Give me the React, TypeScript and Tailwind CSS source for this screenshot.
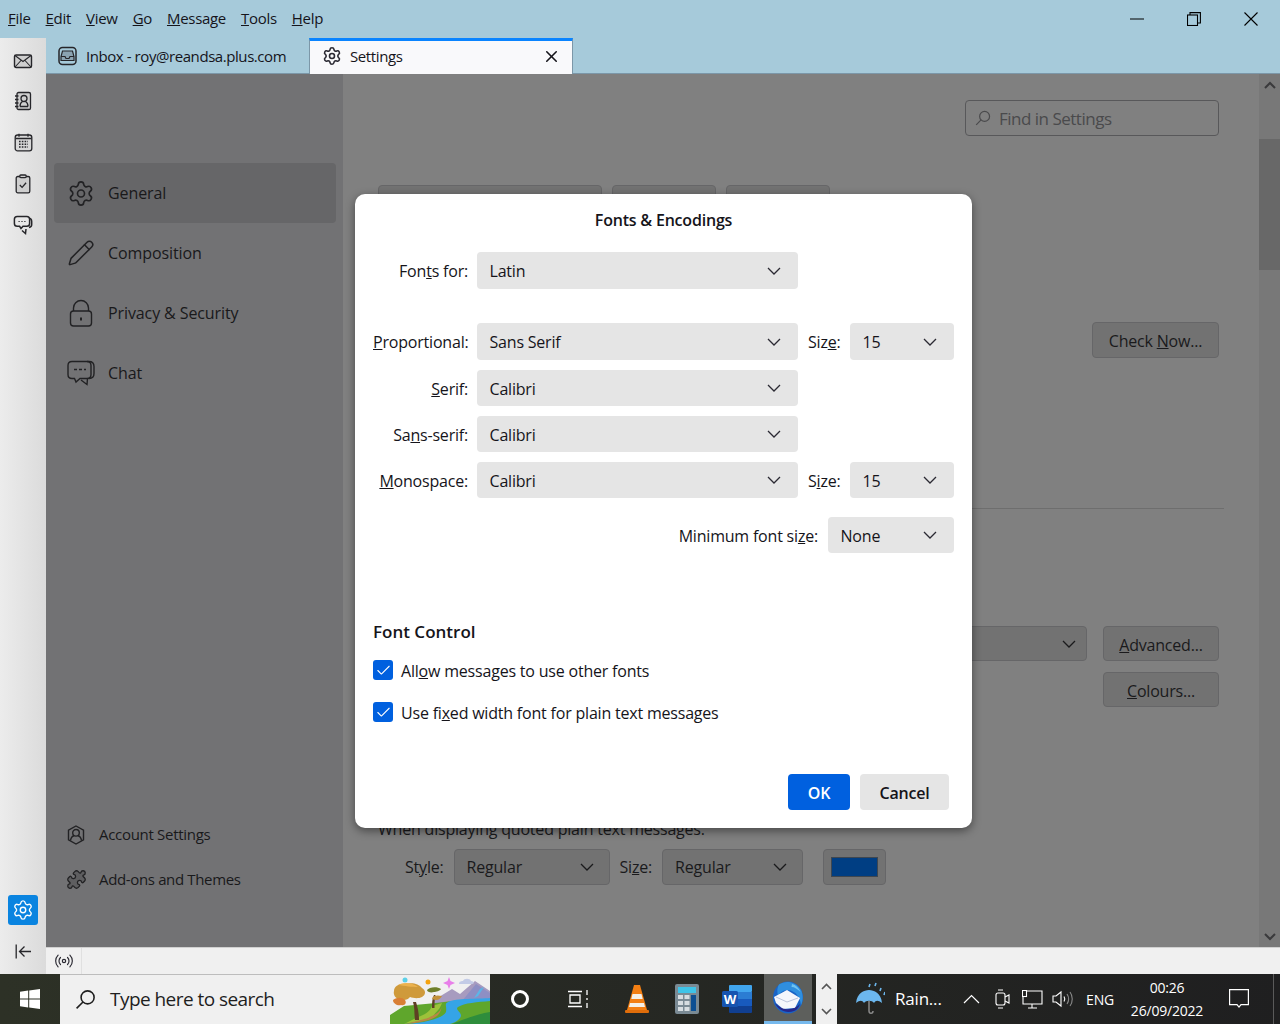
import type { ReactNode } from 'react'
import { Check, Pencil, Puzzle, Radio, Settings, X } from 'lucide-react'

const font = "[font-family:'Open_Sans','Noto_Sans',sans-serif]"

function Chevron({ className = 'text-[#2b2a33]' }: { className?: string }) {
  return (
    <svg width="14" height="8" viewBox="0 0 14 8" fill="none" stroke="currentColor" strokeWidth="1.3" className={className}>
      <path d="M1 1l6 6 6-6" />
    </svg>
  )
}

function Magnifier({ size, className }: { size: number; className?: string }) {
  return (
    <svg width={size} height={size} viewBox="0 0 20 20" fill="none" stroke="currentColor" strokeWidth="1.5" className={className}>
      <circle cx="12" cy="8" r="6.2" />
      <path d="M7.6 12.4L1.5 18.5" />
    </svg>
  )
}

function DialogSelect({ value, width, height = 'h-9', textPad = 'pt-[2px]' }: { value: string; width: string; height?: string; textPad?: string }) {
  return (
    <div className={`${width} ${height} flex items-center justify-between rounded-[4px] bg-[#e5e5e5] pl-[12.5px] pr-[17px] text-[16px] text-[#15141a]`}>
      <span className={textPad}>{value}</span>
      <Chevron />
    </div>
  )
}

function DimSelect({ value, width }: { value: string; width: string }) {
  return (
    <div className={`${width} flex h-9 items-center justify-between rounded-[4px] border border-[#666668] bg-[#727272] pl-3 pr-[15px] text-[16px] text-[#1a1a1c]`}>
      <span>{value}</span>
      <Chevron className="text-[#1a1a1c]" />
    </div>
  )
}

function DimButton({ width, height = 'h-[35px]', children }: { width: string; height?: string; children: ReactNode }) {
  return (
    <div className={`${width} ${height} flex items-center justify-center rounded-[4px] border border-[#666668] bg-[#727272] text-[16px] text-[#1a1a1c]`}>
      {children}
    </div>
  )
}

function FontRow({ label, value, size, tall }: { label: ReactNode; value: string; size?: ReactNode; tall?: boolean }) {
  const textPad = tall ? '' : 'pt-[2px]'
  const height = tall ? 'h-[37px]' : 'h-9'
  return (
    <div className="flex items-center">
      <div className={`w-[95px] text-right text-[16px] text-[#15141a] ${textPad}`}>{label}</div>
      <div className="ml-[9px]">
        <DialogSelect value={value} width="w-[321px]" height={height} textPad={textPad} />
      </div>
      {size && <div className={`ml-[10px] w-[33px] text-[16px] text-[#15141a] ${textPad}`}>{size}</div>}
      {size && (
        <div className="ml-[9px]">
          <DialogSelect value="15" width="w-[104px]" height={height} textPad={textPad} />
        </div>
      )}
    </div>
  )
}

function CheckRow({ children }: { children: ReactNode }) {
  return (
    <div className="flex h-5 items-center">
      <div className="flex size-5 items-center justify-center rounded-[3px] bg-[#0060df]">
        <Check size={17} strokeWidth={1.5} className="text-white" />
      </div>
      <span className="ml-2 pt-[2px] text-[16px] text-[#15141a]">{children}</span>
    </div>
  )
}

function FontsDialog() {
  return (
    <div className="absolute left-[355px] top-[194px] h-[634px] w-[617px] rounded-[10px] bg-white px-[18px] shadow-[0_3px_10px_rgba(0,0,0,0.45)]">
      <div className="flex h-[58px] items-center justify-center pb-[6px] text-[16px] font-semibold text-[#15141a]">Fonts &amp; Encodings</div>
      <FontRow tall label={<>Fon<span className="underline">t</span>s for:</>} value="Latin" />
      <div className="mt-[34px]">
        <FontRow
          tall
          label={<><span className="underline">P</span>roportional:</>}
          value="Sans Serif"
          size={<>Siz<span className="underline">e</span>:</>}
        />
      </div>
      <div className="mt-[10px] flex flex-col gap-[10px]">
        <FontRow label={<><span className="underline">S</span>erif:</>} value="Calibri" />
        <FontRow label={<>Sa<span className="underline">n</span>s-serif:</>} value="Calibri" />
        <FontRow
          label={<><span className="underline">M</span>onospace:</>}
          value="Calibri"
          size={<>S<span className="underline">i</span>ze:</>}
        />
      </div>
      <div className="mt-[19px] flex items-center justify-end gap-[10px]">
        <span className="pt-[2px] text-[16px] text-[#15141a]">Minimum font si<span className="underline">z</span>e:</span>
        <DialogSelect value="None" width="w-[126px]" />
      </div>
      <div className="mt-[67px] text-[17px] font-semibold leading-6 tracking-normal text-[#15141a]">Font Control</div>
      <div className="mt-[16px] flex flex-col gap-[22px]">
        <CheckRow>All<span className="underline">o</span>w messages to use other fonts</CheckRow>
        <CheckRow>Use fi<span className="underline">x</span>ed width font for plain text messages</CheckRow>
      </div>
      <div className="mr-[5px] mt-[52px] flex justify-end gap-[10px]">
        <div className="flex h-9 w-[62px] items-center justify-center rounded-[4px] bg-[#0060df] pt-[2px] text-[16px] font-semibold text-white">OK</div>
        <div className="flex h-9 w-[89px] items-center justify-center rounded-[4px] bg-[#e5e5e5] pt-[2px] text-[16px] font-semibold text-[#15141a]">Cancel</div>
      </div>
    </div>
  )
}

function RailMail() {
  return (
    <svg width="20" height="18" viewBox="0 0 20 18" fill="none" stroke="#26262a" strokeWidth="1.4">
      <rect x="1.5" y="3" width="17" height="12.5" rx="1.6" fill="#cfcfcf" />
      <path d="M2 3.500l8 6 8-6M2 15l6-6.500M18 15l-6-6.500" strokeWidth="1.1" />
    </svg>
  )
}

function RailBook() {
  return (
    <svg width="18" height="20" viewBox="0 0 18 20" fill="none" stroke="#26262a" strokeWidth="1.3" className="-mt-[2px]">
      <rect x="3" y="1.500" width="13.500" height="17" rx="1.600" fill="#cfcfcf" />
      <path d="M1 5h3.500M1 8.500h3.500M1 12h3.500M1 15.500h3.500" />
      <circle cx="10" cy="7.500" r="3" />
      <path d="M6 15.500c0-3 1.500-4.500 2.500-5M14 15.500c0-3-1.500-4.500-2.500-5M6 15.500h8" />
    </svg>
  )
}

function RailCalendar() {
  return (
    <svg width="19" height="19" viewBox="0 0 19 19" fill="none" stroke="#26262a" strokeWidth="1.3">
      <rect x="1.200" y="2" width="16.600" height="15.800" rx="2.400" fill="#d8d8d8" />
      <path d="M1.500 5.500h16M5 .8v3M14 .8v3" />
      <path d="M5 8.500h9M5 11.200h9M5 14h9" strokeWidth="1.600" strokeDasharray="1.600 1.200" />
    </svg>
  )
}

function RailClipboard() {
  return (
    <svg width="16" height="20" viewBox="0 0 16 20" fill="none" stroke="#26262a" strokeWidth="1.3">
      <rect x="1.200" y="2.500" width="13.600" height="16.300" rx="1.600" fill="#cfcfcf" />
      <rect x="4.800" y="1" width="6.400" height="2.600" rx="1" fill="#cfcfcf" />
      <path d="M4.800 11l2.300 2.400 4-4.600" />
    </svg>
  )
}

function RailChat() {
  return (
    <svg width="20" height="20" viewBox="0 0 20 20" fill="none" stroke="#26262a" strokeWidth="1.5">
      <path d="M14 3.200h1.500c2 0 3.200 1.400 3.200 3.200v3c0 1.600-1 2.800-2.700 3" />
      <path d="M4.200 1.500h9.600c1.600 0 2.800 1.200 2.800 2.800v4.200c0 1.600-1.200 2.800-2.800 2.800H10l-2 2.200-1.400-2.200H4.200c-1.600 0-2.800-1.200-2.800-2.800V4.300c0-1.600 1.200-2.800 2.800-2.800z" fill="#e8e8e8" />
      <path d="M9 15.500l3.500 3 .5-4.500" />
      <path d="M5.500 6.500h1.200M8.400 6.500h1.200M11.300 6.500h1.200" strokeWidth="1.200" />
    </svg>
  )
}

function IconRail() {
  return (
    <div className="flex w-[46px] shrink-0 flex-col items-center bg-gradient-to-r from-[#ececec] to-[#dbdbdb] pt-[2px]">
      <div className="flex h-[41px] items-center justify-center"><RailMail /></div>
      <div className="flex h-[41px] items-center justify-center"><RailBook /></div>
      <div className="flex h-[41px] items-center justify-center"><RailCalendar /></div>
      <div className="flex h-[41px] items-center justify-center"><RailClipboard /></div>
      <div className="flex h-[41px] items-center justify-center"><RailChat /></div>
      <div className="mt-auto flex size-[30px] items-center justify-center rounded-[3px] bg-[#0a84e0]">
        <Settings size={22} strokeWidth={1.5} className="text-white" />
      </div>
      <div className="flex h-[49px] items-center justify-center pt-[3px]">
        <svg width="17" height="15" viewBox="0 0 17 15" fill="none" stroke="#26262a" strokeWidth="1.3">
          <path d="M1.200 .5v14M16 7.500H4.500M9.500 2.500l-5 5 5 5" />
        </svg>
      </div>
    </div>
  )
}

function TabStrip() {
  return (
    <div className="flex h-[36px] shrink-0 border-b border-[#7c97a8] bg-[#a6cada] text-[#15141a]">
      <div className="flex w-[263px] items-center pl-3 pt-px">
        <svg width="19" height="20" viewBox="0 0 19 20" fill="none" stroke="#26262a" strokeWidth="1.5">
          <rect x="1" y="1.500" width="17" height="17" rx="3.500" />
          <path d="M4.500 5h10l1.500 5.500v4H3v-4L4.500 5z" fill="#8ba3b1" strokeWidth="1.200" />
          <path d="M3 10.500h4l1 2h3l1-2h4" strokeWidth="1.200" />
        </svg>
        <span className="ml-[9px] text-[15px] tracking-[-0.43px]">Inbox - roy@reandsa.plus.com</span>
      </div>
      <div className="-mb-px flex w-[264px] items-center border-x border-t-[3px] border-x-[#7c97a8] border-t-[#0a84ff] bg-[#f9f9fb] pb-[3px] pl-3 pr-[11px]">
        <Settings size={20} strokeWidth={1.9} className="text-[#2b2a33]" />
        <span className="ml-[8px] text-[15px] tracking-[-0.4px]">Settings</span>
        <X size={19} strokeWidth={2} className="ml-auto text-[#15141a]" />
      </div>
    </div>
  )
}

function NavItem({ icon, label, active }: { icon: ReactNode; label: string; active?: boolean }) {
  return (
    <div className={`ml-2 mr-[7px] flex h-[60px] items-center rounded-[4px] pl-[13px] text-[16px] tracking-[-0.1px] text-[#19191b] ${active ? 'bg-[#666668]' : ''}`}>
      <div className="flex w-[28px] justify-center">{icon}</div>
      <span className="ml-[13px]">{label}</span>
    </div>
  )
}

function Sidebar() {
  return (
    <div className="flex w-[297px] shrink-0 flex-col bg-[#727274] pb-[45px] pt-[89px]">
      <NavItem active label="General" icon={<Settings size={29} strokeWidth={1.4} className="text-[#222224]" />} />
      <NavItem label="Composition" icon={<Pencil size={28} strokeWidth={1.3} className="text-[#222224]" />} />
      <NavItem
        label="Privacy & Security"
        icon={
          <svg width="24" height="28" viewBox="0 0 24 28" fill="none" stroke="#222224" strokeWidth="1.4">
            <rect x="1.500" y="12" width="21" height="15" rx="3" />
            <path d="M4.500 12V9a7.500 7.500 0 0115 0v3" />
            <path d="M12 18.500v3" strokeWidth="2" />
          </svg>
        }
      />
      <NavItem
        label="Chat"
        icon={
          <svg width="28" height="26" viewBox="0 0 28 26" fill="none" stroke="#222224" strokeWidth="1.4">
            <path d="M20 1.500h2c3 0 5 2 5 5v7c0 3-2 5-5 5" />
            <path d="M5 1.500h15c2.500 0 4 1.500 4 4v9c0 2.500-1.500 4-4 4h-7l-4 3.500-1.500-3.500H5c-2.500 0-4-1.500-4-4v-9c0-2.500 1.500-4 4-4z" />
            <path d="M14 20l6 4.500.5-6" />
            <path d="M7 9.500h3M12 9.500h3M17 9.500h2" />
          </svg>
        }
      />
      <div className="mt-auto flex h-[45px] items-center pl-[21px] text-[15px] tracking-[-0.3px] text-[#19191b]">
        <svg width="18" height="20" viewBox="0 0 18 20" fill="none" stroke="#222224" strokeWidth="1.400">
          <path d="M9 1l7.500 4.200v9.600L9 19l-7.500-4.200V5.200z" />
          <circle cx="9" cy="7.800" r="3.300" />
          <path d="M3.500 15.500c.5-3 2.500-4.500 3.500-4.700M14.500 15.500c-.5-3-2.500-4.500-3.500-4.700" />
        </svg>
        <span className="ml-[14px]">Account Settings</span>
      </div>
      <div className="flex h-[45px] items-center pl-[20px] text-[15px] tracking-[-0.35px] text-[#19191b]">
        <Puzzle size={21} strokeWidth={1.5} fill="#5e5e60" className="text-[#222224]" />
        <span className="ml-[12px]">Add-ons and Themes</span>
      </div>
    </div>
  )
}

function DimContent() {
  return (
    <div className="flex min-w-0 flex-1 flex-col items-stretch bg-[#808080] pl-[35px] pr-[40px] pt-[26px]">
      <div className="flex h-9 w-[254px] items-center self-end rounded-[4px] border border-[#58585a] pl-[9px] text-[17px] tracking-[-0.5px] text-[#4a4a4c]">
        <Magnifier size={16} className="text-[#4a4a4c]" />
        <span className="ml-[8px] pt-[2px]">Find in Settings</span>
      </div>
      <div className="mt-[49px] flex gap-[10px]">
        <div className="h-[40px] w-[224px] rounded-[4px] border border-[#666668] bg-[#727272]" />
        <div className="h-[40px] w-[104px] rounded-[4px] border border-[#666668] bg-[#727272]" />
        <div className="h-[40px] w-[104px] rounded-[4px] border border-[#666668] bg-[#727272]" />
      </div>
      <div className="mt-[97px] self-end">
        <DimButton width="w-[127px]" height="h-9"><span className="pt-[2px]">Check <span className="underline">N</span>ow...</span></DimButton>
      </div>
      <div className="-mr-[5px] mt-[150px] h-px bg-[#6e6e6e]" />
      <div className="mt-[117px] flex justify-end gap-4">
        <div className="flex h-[35px] w-[400px] items-center justify-end rounded-[4px] border border-[#666668] bg-[#727272] pr-[10px]">
          <Chevron className="text-[#1a1a1c]" />
        </div>
        <DimButton width="w-[116px]"><span className="pt-[2px]"><span className="underline">A</span>dvanced...</span></DimButton>
      </div>
      <div className="mt-[11px] self-end">
        <DimButton width="w-[116px]"><span className="pt-[2px]"><span className="underline">C</span>olours...</span></DimButton>
      </div>
      <div className="mt-[112px] h-5 text-[16px] leading-5 text-[#1a1a1c]">When displaying quoted plain text messages:</div>
      <div className="ml-[27px] mt-[10px] flex items-center">
        <span className="text-[16px] text-[#1a1a1c]">St<span className="underline">y</span>le:</span>
        <div className="ml-[10px]"><DimSelect value="Regular" width="w-[156px]" /></div>
        <span className="ml-[10px] text-[16px] text-[#1a1a1c]">Si<span className="underline">z</span>e:</span>
        <div className="ml-[10px]"><DimSelect value="Regular" width="w-[141px]" /></div>
        <div className="ml-5 flex h-9 w-[63px] items-center justify-center rounded-[4px] border border-[#666668] bg-[#727272]">
          <div className="h-5 w-[47px] border border-[#3f4750] bg-[#003e83]" />
        </div>
      </div>
    </div>
  )
}

function Scrollbar() {
  return (
    <div className="flex w-[21px] shrink-0 flex-col items-center bg-[#787878]">
      <div className="flex h-[65px] w-full justify-center pt-[7px]">
        <svg width="12" height="8" viewBox="0 0 12 8" fill="none" stroke="#3a3a3c" strokeWidth="2">
          <path d="M1 7l5-5 5 5" />
        </svg>
      </div>
      <div className="h-[131px] w-full bg-[#686868]" />
      <svg width="12" height="8" viewBox="0 0 12 8" fill="none" stroke="#3a3a3c" strokeWidth="2" className="mb-[6px] mt-auto">
        <path d="M1 1l5 5 5-5" />
      </svg>
    </div>
  )
}

function StatusBar() {
  return (
    <div className="flex h-[27px] shrink-0 border-t border-[#d0d0d0] bg-[#f0f0f0]">
      <div className="flex w-[36px] items-center justify-center border-r border-[#e0e0e0]">
        <Radio size={20} strokeWidth={1.4} className="text-[#2b2a33]" />
      </div>
    </div>
  )
}

function Landscape() {
  return (
    <svg width="100" height="49" viewBox="0 0 100 49" className="shrink-0">
      <rect width="100" height="49" fill="#f0f0f0" />
      <path d="M44 25l18-11 8 5 15-13 15 10v30H44z" fill="#a79bbf" />
      <path d="M72 26l14-17 14 9v16H72z" fill="#8d8fc4" />
      <path d="M90 14l4-2-6 9-4 2z" fill="#5ab6e8" />
      <path d="M0 49V40l14-9 32-3 24-3 30 0v24z" fill="#5fa62c" />
      <path d="M62 49c8-3 24-10 38-12v12z" fill="#2e8d3c" />
      <path d="M14 49c12 0 38-4 42-12 1-6-2-8 2-10 8-4 30-3 42-4v3c-12 1-26 2-32 6-4 3 6 6 2 11-2 3-6 5-10 6z" fill="#35a4e6" />
      <path d="M14 49c8-2 24-3 30-9 3-4 6-6 8-12l-10 3c-2 6-8 9-14 11z" fill="#9cc23a" />
      <path d="M16 49c12-1 28-4 32-9 3-3 3-6 4-9-1 6-8 9-14 12-7 2-15 4-22 6z" fill="#b98645" />
      <path d="M25 45c-1-6 0-12-2-18l3 0c2 6 3 12 3 18z" fill="#5e4023" />
      <path d="M42 33c0-5 0-9 2-13h1.500c-1 4-1 8-1 13z" fill="#5e4023" />
      <path d="M4 16c0-5 6-8 12-7 6-2 13 0 16 4 4 2 4 7 0 9-4 2-9 1-12 0-2 3-7 4-10 2-5 0-7-5-6-8z" fill="#cf9a3b" />
      <path d="M8 10c5-3 14-3 20 2-5 0-14-1-20-2z" fill="#ecb24e" />
      <path d="M3 25c4-3 9-3 12 0 2 3 0 6-4 5-3 1-8-1-8-5z" fill="#d97f35" />
      <path d="M37 15c2-3 10-4 14-1-1 2-5 3-7 3-3 1-7 0-7-2z" fill="#6f7f2a" />
      <path d="M42 23c2-3 6-3 10-2-1 2-3 4-6 4-2 0-4-1-4-2z" fill="#c3923a" />
      <circle cx="15" cy="5" r="2.500" fill="#5bd0e8" />
      <circle cx="38" cy="7" r="2.500" fill="#f5a30f" />
      <path d="M59 2l1.500 4 4.500 2-4.500 2-1.500 4-1.500-4-4.500-2 4.500-2z" fill="#e87fe9" />
      <path d="M69 9c0-3 3-3 4-3 1-3 7-3 8 0 3 0 4 3 1 3z" fill="#c3cbe6" />
    </svg>
  )
}

function Taskbar() {
  return (
    <div className="flex h-[50px] shrink-0 items-stretch bg-gradient-to-r from-[#2d3126] to-[#1f1f20] text-white">
      <div className="flex w-[60px] items-center justify-center">
        <svg width="20" height="20" viewBox="0 0 20 20" fill="#fff">
          <path d="M0 2.800L8.200 1.600v7.900H0zM9.200 1.500L20 0v9.500H9.200zM0 10.500h8.200v7.900L0 17.200zM9.200 10.500H20V20L9.200 18.500z" />
        </svg>
      </div>
      <div className="flex w-[430px] items-center border-t border-[#bdbdbd] bg-[#f0f0f0] pl-[15px] text-[#1e1e1e]">
        <Magnifier size={21} className="text-[#1e1e1e]" />
        <span className="ml-[14px] w-[280px] text-[19px] tracking-[-0.55px]">Type here to search</span>
        <Landscape />
      </div>
      <div className="flex w-[58px] items-center justify-center pl-px">
        <div className="size-[18px] rounded-full border-[3px] border-white" />
      </div>
      <div className="flex w-[58px] items-center justify-center pl-px">
        <svg width="22" height="20" viewBox="0 0 22 20" fill="none" stroke="#fff" strokeWidth="1.300">
          <path d="M1 2.500h14M1 17.500h14M3 6h10v8H3zM20 1v5M20 9v2M20 14v5" />
        </svg>
      </div>
      <div className="flex w-[62px] items-center justify-center">
        <svg width="26" height="30" viewBox="0 0 26 30">
          <path d="M10 1h6l7 25H3z" fill="#f37f13" />
          <path d="M8.500 10h9l1.200 5H7.300zM6 19h14l1 4H5z" fill="#f4f0e8" />
          <rect x="1" y="26" width="24" height="3" rx="1" fill="#e06d0a" />
        </svg>
      </div>
      <div className="flex w-[38px] items-center justify-center">
        <svg width="24" height="30" viewBox="0 0 24 30">
          <rect width="24" height="30" rx="2" fill="#7a8a94" />
          <rect x="3" y="3" width="18" height="6" fill="#3fc4e8" />
          <rect x="3" y="11" width="5" height="4" fill="#d7dde1" />
          <rect x="9.500" y="11" width="5" height="4" fill="#d7dde1" />
          <rect x="3" y="17" width="5" height="4" fill="#d7dde1" />
          <rect x="9.500" y="17" width="5" height="4" fill="#d7dde1" />
          <rect x="3" y="23" width="5" height="4" fill="#d7dde1" />
          <rect x="9.500" y="23" width="5" height="4" fill="#d7dde1" />
          <rect x="16" y="11" width="5" height="16" fill="#0d4f92" />
        </svg>
      </div>
      <div className="flex w-[58px] items-center justify-center pl-1">
        <svg width="30" height="30" viewBox="0 0 30 30">
          <rect x="7" y="1" width="23" height="7" rx="1" fill="#41a5ee" />
          <rect x="7" y="8" width="23" height="7" fill="#2b7cd3" />
          <rect x="7" y="15" width="23" height="7" fill="#185abd" />
          <rect x="7" y="22" width="23" height="7" rx="1" fill="#103f91" />
          <rect x="0" y="7" width="16" height="16" rx="1.500" fill="#1654b0" />
          <text x="8" y="19.500" textAnchor="middle" fontSize="13" fontWeight="700" fill="#fff" fontFamily="Open Sans, sans-serif">W</text>
        </svg>
      </div>
      <div className="relative flex w-[48px] items-center justify-center bg-[#5d5f5c] pb-[4px]">
        <svg width="32" height="33" viewBox="0 0 32 33">
          <ellipse cx="16" cy="16.500" rx="15" ry="16" fill="#1a63c6" />
          <path d="M7 3.500C13-1 24 0 29 9c2.500 5 2 11 0 15-1-8-5-14-13-15-4 0-8 2-10 6-1-4-1-8 1-11.500z" fill="#2f8fdf" />
          <path d="M20 3c4 1 7 4 8.500 8-3-3-6-5-9-5z" fill="#6ec3f2" />
          <path d="M2 16l13-7 13 8-5 10-12 1-7-6z" fill="#f5f6fc" />
          <path d="M4 16l11 5 11-4" fill="none" stroke="#bcc4dc" strokeWidth="1" />
          <path d="M3 22c3 7 11 11 19 8 3-1 5-4 6-7-3 3-7 5-11 5-5 1-10-2-14-6z" fill="#26278b" />
        </svg>
        <div className="absolute inset-x-0 bottom-0 h-[3px] bg-[#76b9ed]" />
      </div>
      <div className="ml-1 flex w-[21px] flex-col items-center justify-between bg-[#f0f0f0] py-[9px]">
        <svg width="11" height="7" viewBox="0 0 11 7" fill="none" stroke="#555" strokeWidth="1.600"><path d="M1 6l4.500-4.500L10 6" /></svg>
        <svg width="11" height="7" viewBox="0 0 11 7" fill="none" stroke="#555" strokeWidth="1.600"><path d="M1 1l4.500 4.500L10 1" /></svg>
      </div>
      <div className="flex w-[48px] items-center justify-end">
        <svg width="30" height="34" viewBox="0 0 30 34">
          <path d="M1 21C2 11 9 8 14 8s12 3 13 13c-4-3-6-3-8 0-2-3-8-3-10 0-2-3-4-3-8 0z" fill="#6cb7ee" />
          <path d="M14 19v10c0 3 4 3 4 0" fill="none" stroke="#8a8a8a" strokeWidth="1.500" />
          <path d="M14 5l1-3M20 4l1-3M25 9l1-3M29 13l1-3" stroke="#6cb7ee" strokeWidth="1.600" />
        </svg>
      </div>
      <div className="ml-[10px] flex w-[60px] items-center text-[17px]">Rain...</div>
      <div className="flex w-[26px] items-center justify-start pl-[8px]">
        <svg width="17" height="10" viewBox="0 0 17 10" fill="none" stroke="#fff" strokeWidth="1.200"><path d="M1 9l7.500-7.500L16 9" /></svg>
      </div>
      <div className="flex w-[39px] items-center justify-center pl-[3px]">
        <svg width="15" height="22" viewBox="0 0 15 22" fill="none" stroke="#fff" strokeWidth="1.100">
          <rect x="1" y="5" width="9" height="12" rx="2" />
          <path d="M10 9l4-2v8l-4-2M3 2h5M3 20h5" />
        </svg>
      </div>
      <div className="flex w-[24px] items-center justify-center">
        <svg width="21" height="19" viewBox="0 0 21 19" fill="none" stroke="#fff" strokeWidth="1.100">
          <path d="M5 1h15v13H1V7M10 14v4M6 18h9" />
          <rect x=".5" y=".5" width="4" height="6" />
        </svg>
      </div>
      <div className="flex w-[36px] items-center justify-center">
        <svg width="21" height="18" viewBox="0 0 21 18" fill="none" stroke="#fff" strokeWidth="1.100">
          <path d="M1 6h3l5-4v14l-5-4H1z" />
          <path d="M12 6.500c1 1.500 1 3.500 0 5" />
          <path d="M15 4c2 3 2 7 0 10M18 2c3 4 3 10 0 14" stroke="#8a8a8a" />
        </svg>
      </div>
      <div className="flex w-[40px] items-center justify-center text-[14px]">ENG</div>
      <div className="ml-[6px] flex w-[82px] flex-col items-center justify-center text-[14px] leading-[23px]">
        <span>00:26</span>
        <span>26/09/2022</span>
      </div>
      <div className="ml-[10px] flex w-[42px] items-center justify-center">
        <svg width="20" height="20" viewBox="0 0 20 20" fill="none" stroke="#fff" strokeWidth="1.200">
          <path d="M.6.600h18.800v15H12l-2 2.500-2-2.500H.6z" />
        </svg>
      </div>
      <div className="ml-[13px] w-px bg-[#5a5a5a]" />
    </div>
  )
}

export default function App() {
  return (
    <div className={`relative flex h-[1024px] w-[1280px] flex-col overflow-hidden tracking-[-0.2px] ${font}`}>
      <div className="flex h-[38px] shrink-0 items-center justify-between bg-[#a6cada] pl-2 text-[15px] tracking-[-0.3px] text-[#15141a]">
        <div className="flex gap-[15px] pb-[2px]">
          <span><span className="underline">F</span>ile</span>
          <span><span className="underline">E</span>dit</span>
          <span><span className="underline">V</span>iew</span>
          <span><span className="underline">G</span>o</span>
          <span><span className="underline">M</span>essage</span>
          <span><span className="underline">T</span>ools</span>
          <span><span className="underline">H</span>elp</span>
        </div>
        <div className="flex items-center gap-[43px] pr-[22px]">
          <svg width="14" height="2" viewBox="0 0 14 2" stroke="#000"><path d="M0 1h14" /></svg>
          <svg width="14" height="14" viewBox="0 0 14 14" fill="none" stroke="#000" strokeWidth="1.100">
            <rect x=".5" y="3" width="10" height="10.500" />
            <path d="M3 3V.6h10.400v10.400H10.500" />
          </svg>
          <svg width="14" height="14" viewBox="0 0 14 14" fill="none" stroke="#000" strokeWidth="1.100">
            <path d="M.5.500l13 13M13.500.500l-13 13" />
          </svg>
        </div>
      </div>
      <div className="flex min-h-0 flex-1">
        <IconRail />
        <div className="flex min-w-0 flex-1 flex-col">
          <TabStrip />
          <div className="flex min-h-0 flex-1">
            <Sidebar />
            <DimContent />
            <Scrollbar />
          </div>
          <StatusBar />
        </div>
      </div>
      <Taskbar />
      <FontsDialog />
    </div>
  )
}
